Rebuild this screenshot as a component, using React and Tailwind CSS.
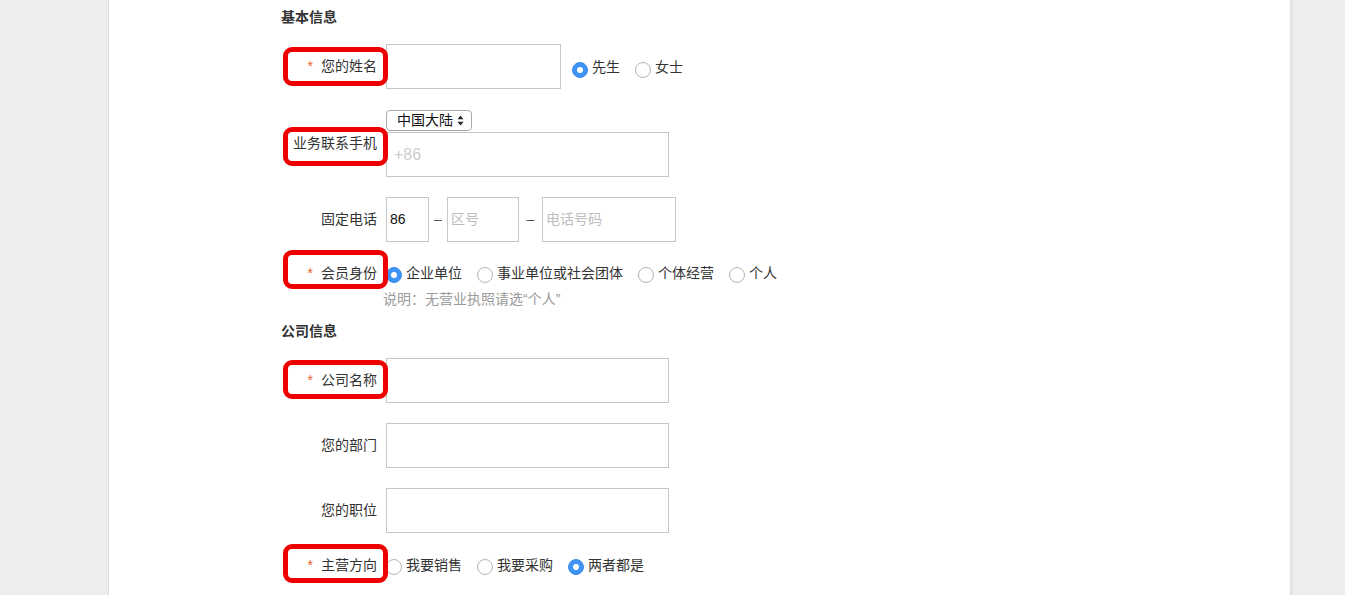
import React from 'react';

const FONT = { fontFamily: '"Helvetica Neue", "Liberation Sans", "Noto Sans CJK SC", sans-serif' };

// 单选按钮（仿 macOS 样式）
const Radio = ({ checked, label, first }) => (
  <label className={`flex items-center ${first ? '' : 'ml-[15px]'}`}>
    <span
      className={`mt-[4px] w-[16px] h-[16px] rounded-full flex items-center justify-center shrink-0 ${
        checked ? 'bg-[#3d94f6] border border-[#3a8ce8]' : 'bg-white border border-[#b4b4b4]'
      }`}
    >
      {checked && <span className="w-[6px] h-[6px] rounded-full bg-white" />}
    </span>
    <span className="ml-[4px] text-[14px] text-[#333]">{label}</span>
  </label>
);

// 左侧标签，必填项外加红框标注
const Label = ({ text, required, marked, offset = 0 }) => (
  <div className="relative w-[105px] shrink-0 flex items-center justify-end pr-[9px] self-stretch">
    <span className="text-[14px] text-[#333] whitespace-nowrap">
      {required && <span className="text-[#f0602c] mr-[8px]">*</span>}
      {text}
    </span>
    {marked && (
      <div
        className="absolute left-[2px] w-[105px] h-[39px] border-[5px] border-[#ee0000] rounded-[9px] pointer-events-none"
        style={{ top: `calc(50% - 20px + ${offset}px)` }}
      />
    )}
  </div>
);

const Input = ({ w = 'w-[283px]', placeholder, value, pad = 'px-[3px]' }) => (
  <div className={`${w} h-[45px] border border-[#c6c6c6] bg-white flex items-center ${pad} shrink-0`}>
    {value ? (
      <span className="text-[14px] text-[#111]">{value}</span>
    ) : (
      <span className="text-[14px] text-[#bdbdbd]">{placeholder}</span>
    )}
  </div>
);

const Heading = ({ children, className = '' }) => (
  <div className={`h-[20px] flex items-center text-[14px] font-bold text-[#333] ${className}`}>{children}</div>
);

export default function App() {
  return (
    <div className="h-[595px] overflow-hidden bg-[#eeeeee]" style={FONT}>
      <div className="ml-[108px] w-[1185px] h-full bg-white border-l border-[#dcdcdc] border-r-[3px] border-r-[#e4e4e4] pl-[172px] pt-[7px]">
        <Heading>基本信息</Heading>

        {/* 您的姓名 */}
        <div className="flex mt-[17px] h-[45px]">
          <Label text="您的姓名" required marked offset={0} />
          <Input w="w-[175px]" />
          <div className="flex items-center ml-[11px] mt-[2px]">
            <Radio checked label="先生" first />
            <Radio label="女士" />
          </div>
        </div>

        {/* 业务联系手机 */}
        <div className="flex mt-[21px]">
          <Label text="业务联系手机" marked offset={3} />
          <div className="flex flex-col">
            <div className="w-[86px] h-[21px] border border-[#a9a9a9] rounded-[4px] flex items-center pl-[10px] text-[14px] text-[#111] bg-white">
              中国大陆
              <svg className="ml-[4px]" width="7" height="11" viewBox="0 0 7 11">
                <path d="M3.5 0.5 L6.5 4.3 L0.5 4.3 Z M3.5 10.5 L6.5 6.7 L0.5 6.7 Z" fill="#222" />
              </svg>
            </div>
            <div className="mt-[1px]">
              <Input
                pad="px-[7px]"
                placeholder={<span className="text-[16px] text-[#cccccc]" style={{ fontFamily: '"Liberation Sans", sans-serif' }}>+86</span>}
              />
            </div>
          </div>
        </div>

        {/* 固定电话 */}
        <div className="flex mt-[20px] h-[45px]">
          <Label text="固定电话" />
          <Input w="w-[43px]" value="86" />
          <span className="w-[18px] flex items-center justify-center text-[14px] text-[#555]">–</span>
          <Input w="w-[72px]" placeholder="区号" />
          <span className="w-[23px] flex items-center justify-center text-[14px] text-[#555]">–</span>
          <Input w="w-[134px]" placeholder="电话号码" />
        </div>

        {/* 会员身份 */}
        <div className="flex mt-[21px] h-[20px]">
          <Label text="会员身份" required marked offset={-3} />
          <div className="flex items-center">
            <Radio checked label="企业单位" first />
            <Radio label="事业单位或社会团体" />
            <Radio label="个体经营" />
            <Radio label="个人" />
          </div>
        </div>
        <div className="h-[20px] mt-[6px] ml-[102px] flex items-center text-[14px] text-[#9a9a9a]">
          说明：无营业执照请选“个人”
        </div>

        <Heading className="mt-[12px]">公司信息</Heading>

        {/* 公司名称 */}
        <div className="flex mt-[17px] h-[45px]">
          <Label text="公司名称" required marked offset={-1} />
          <Input />
        </div>

        <div className="flex mt-[20px] h-[45px]">
          <Label text="您的部门" />
          <Input />
        </div>

        <div className="flex mt-[20px] h-[45px]">
          <Label text="您的职位" />
          <Input />
        </div>

        {/* 主营方向 */}
        <div className="flex mt-[22px] h-[20px]">
          <Label text="主营方向" required marked offset={-1} />
          <div className="flex items-center">
            <Radio label="我要销售" first />
            <Radio label="我要采购" />
            <Radio checked label="两者都是" />
          </div>
        </div>
      </div>
    </div>
  );
}
